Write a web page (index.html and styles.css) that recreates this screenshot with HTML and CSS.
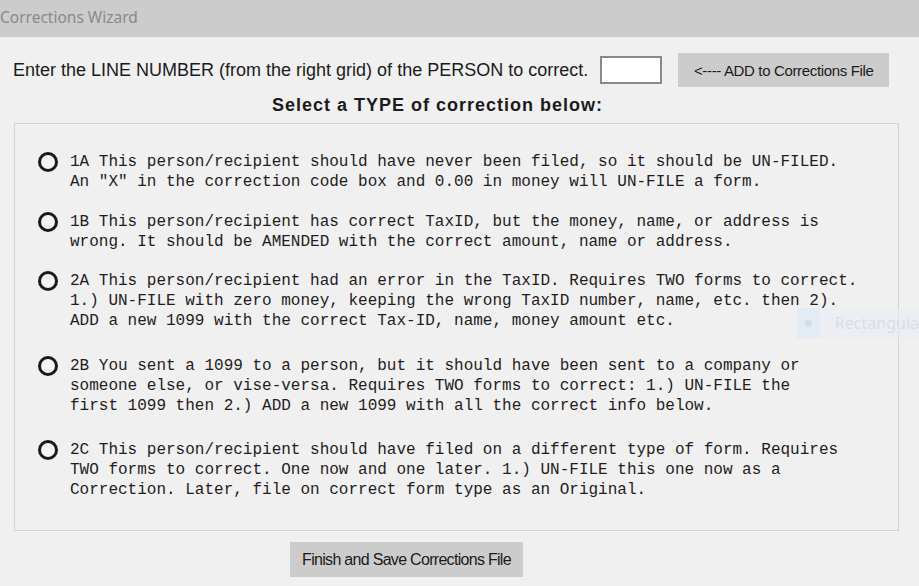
FILE: index.html
```html
<!DOCTYPE html>
<html>
<head>
<meta charset="utf-8">
<link rel="stylesheet" href="styles.css">
</head>
<body>
<div class="window">
  <header class="titlebar"><span class="title">Corrections Wizard</span></header>
  <div class="row-line">
    <span class="prompt">Enter the LINE NUMBER (from the right grid) of the PERSON to correct.</span>
    <input class="line-input" type="text">
    <button class="btn btn-add">&lt;---- ADD to Corrections File</button>
  </div>
  <div class="heading">Select a TYPE of correction below:</div>
  <div class="groupbox">
    <div class="opt opt-1a">
      <span class="radio"></span>
      <div class="opt-text">1A This person/recipient should have never been filed, so it should be UN-FILED.<br>An "X" in the correction code box and 0.00 in money will UN-FILE a form.</div>
    </div>
    <div class="opt opt-1b">
      <span class="radio"></span>
      <div class="opt-text">1B This person/recipient has correct TaxID, but the money, name, or address is<br>wrong. It should be AMENDED with the correct amount, name or address.</div>
    </div>
    <div class="opt opt-2a">
      <span class="radio"></span>
      <div class="opt-text">2A This person/recipient had an error in the TaxID. Requires TWO forms to correct.<br>1.) UN-FILE with zero money, keeping the wrong TaxID number, name, etc. then 2).<br>ADD a new 1099 with the correct Tax-ID, name, money amount etc.</div>
    </div>
    <div class="opt opt-2b">
      <span class="radio"></span>
      <div class="opt-text">2B You sent a 1099 to a person, but it should have been sent to a company or<br>someone else, or vise-versa. Requires TWO forms to correct: 1.) UN-FILE the<br>first 1099 then 2.) ADD a new 1099 with all the correct info below.</div>
    </div>
    <div class="opt opt-2c">
      <span class="radio"></span>
      <div class="opt-text">2C This person/recipient should have filed on a different type of form. Requires<br>TWO forms to correct. One now and one later. 1.) UN-FILE this one now as a<br>Correction. Later, file on correct form type as an Original.</div>
    </div>
  </div>
  <div class="footer">
    <button class="btn btn-finish">Finish and Save Corrections File</button>
  </div>
  <div class="ghost"><span class="ghost-icon"><span class="ghost-dot"></span></span><span class="ghost-text">Rectangula</span></div>
</div>
</body>
</html>
```
FILE: styles.css
```css
html, body {
  margin: 0;
  padding: 0;
  background: #f0f0f0;
}
.window {
  position: relative;
  width: 919px;
  height: 586px;
  overflow: hidden;
  background: #f0f0f0;
  font-family: "Liberation Sans", Arial, sans-serif;
  color: #1b1b1b;
}
.titlebar {
  height: 37px;
  background: #cccccc;
  display: flex;
  align-items: center;
}
.title {
  font-family: "Noto Sans", "Open Sans", sans-serif;
  font-size: 15.5px;
  color: #8a8a8a;
  margin-top: -4px;
}
.row-line {
  display: flex;
  align-items: center;
  height: 34px;
  margin-top: 16px;
  padding-left: 13px;
}
.prompt {
  font-size: 18px;
  white-space: nowrap;
}
.line-input {
  box-sizing: border-box;
  width: 62px;
  height: 28px;
  margin: 0 0 0 12px;
  border: 2px solid #8a8a8a;
  background: #ffffff;
  padding: 0;
}
.btn {
  border: none;
  background: #cccccc;
  font-family: "Liberation Sans", Arial, sans-serif;
  color: #1b1b1b;
  padding: 0;
  cursor: default;
}
.btn-add {
  width: 211px;
  height: 34px;
  margin-left: 16px;
  font-size: 15px;
  letter-spacing: -0.35px;
}
.heading {
  margin: 8px 0 0 272px;
  height: 20px;
  line-height: 20px;
  font-size: 18px;
  font-weight: bold;
  letter-spacing: 1px;
  white-space: nowrap;
}
.groupbox {
  box-sizing: border-box;
  margin: 8px 0 0 14px;
  width: 885px;
  height: 408px;
  border: 1px solid #d4d4d4;
  padding: 28px 0 0 23px;
}
.opt {
  display: flex;
  align-items: flex-start;
}
.opt-1b { margin-top: 20px; }
.opt-2a { margin-top: 19px; }
.opt-2b { margin-top: 25px; }
.opt-2c { margin-top: 24px; }
.radio {
  box-sizing: border-box;
  flex: none;
  width: 20px;
  height: 20px;
  border: 3px solid #1a1a1a;
  border-radius: 50%;
  background: #f4f4f4;
}
.opt-text {
  margin-left: 12px;
  font-family: "Liberation Mono", "Courier New", monospace;
  font-size: 16px;
  line-height: 20px;
  white-space: nowrap;
  color: #241c1c;
}
.footer {
  margin: 11px 0 0 290px;
}
.btn-finish {
  width: 233px;
  height: 35px;
  font-size: 16px;
  letter-spacing: -0.7px;
}
.ghost {
  position: absolute;
  left: 797px;
  top: 308px;
  width: 122px;
  height: 30px;
  background: rgba(232, 238, 247, 0.55);
  display: flex;
  align-items: center;
  overflow: hidden;
}
.ghost-icon {
  width: 30px;
  height: 30px;
  background: rgba(222, 231, 245, 0.6);
  display: flex;
  align-items: center;
  justify-content: center;
}
.ghost-dot {
  width: 7px;
  height: 7px;
  border-radius: 50%;
  background: #d6dce6;
}
.ghost-text {
  margin-left: 15px;
  font-family: "Noto Sans", sans-serif;
  font-size: 16px;
  color: #dadde3;
  white-space: nowrap;
}
```
